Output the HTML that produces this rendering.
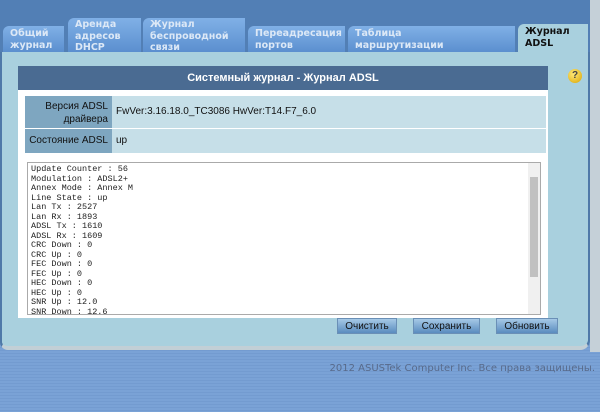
<!DOCTYPE html><html><head><meta charset="utf-8"><style>
body{margin:0;width:600px;height:412px;overflow:hidden;background:repeating-linear-gradient(#7aa2d6 0 2px,#739bd0 2px 3px);font-family:"Liberation Sans",sans-serif;position:relative}
.top{position:absolute;left:0;top:0;width:590px;height:52px;background:#527fb5}
.panel{position:absolute;left:0;top:52px;width:590px;height:298px;background:#a9d0de;border-left:2px solid #4f79a8;border-bottom:4px solid #c2cfd6;border-right:2px solid #4f79a8;border-radius:0 0 10px 8px;box-sizing:border-box}
.rgrey{position:absolute;left:590px;top:0;width:10px;height:352px;background:#c5d0d8}
.tab{position:absolute;top:26px;height:26px;background:linear-gradient(#80b0e6,#5b8fcf);color:#dce8f6;font:bold 9.5px/11.5px "DejaVu Sans",sans-serif;padding:2px 0 0 7px;box-sizing:border-box;border-radius:6px 0 0 0;white-space:nowrap;overflow:hidden}
.tab.up{top:18px;height:34px;padding-top:1px}
.act{background:#a9d0de;color:#111}
.hdr{position:absolute;left:18px;top:66px;width:530px;height:24px;background:#4a6b92;color:#fff;font:bold 11px/24px "Liberation Sans",sans-serif;text-align:center}
.box{position:absolute;left:18px;top:90px;width:530px;height:228px;background:#fff}
.l{position:absolute;left:25px;width:87px;background:#7ea6c0;font-size:10px;text-align:right;color:#111;box-sizing:border-box;padding-right:4px}
.v{position:absolute;left:112px;width:434px;background:#c6dfe8;font-size:10px;color:#111;padding-left:4px;box-sizing:border-box}
.ta{position:absolute;left:27px;top:162px;width:514px;height:153px;border:1px solid #aaa;box-sizing:border-box;overflow:hidden;background:#fff}
pre{margin:0;padding:2px 3px;font:8.5px/9.5px "Liberation Mono",monospace;color:#222}
.sb{position:absolute;right:0;top:0;width:12px;height:100%;background:#f0f0f0}
.btn{position:absolute;top:318px;height:16px;background:linear-gradient(#a6c9e6,#5a8cbf);border:1px solid #6a8fb6;font-size:10px;line-height:16px;text-align:center;color:#111;box-sizing:border-box}
</style></head><body>
<div class="top"></div><div class="rgrey"></div>
<div class="panel"></div>
<div class="tab" style="left:3px;width:61px">Общий<br>журнал</div>
<div class="tab up" style="left:68px;width:73px">Аренда<br>адресов<br>DHCP</div>
<div class="tab up" style="left:143px;width:102px">Журнал<br>беспроводной<br>связи</div>
<div class="tab" style="left:248px;width:97px">Переадресация<br>портов</div>
<div class="tab" style="left:348px;width:167px">Таблица<br>маршрутизации</div>
<div class="tab act" style="left:518px;width:70px;top:24px;height:29px">Журнал<br>ADSL</div>
<div class="hdr">Системный журнал - Журнал ADSL</div>
<div class="box"></div>
<div class="l" style="top:96px;height:32px;padding-top:4px;line-height:13px">Версия ADSL<br>драйвера</div>
<div class="v" style="top:96px;height:32px;line-height:32px">FwVer:3.16.18.0_TC3086 HwVer:T14.F7_6.0</div>
<div class="l" style="top:129px;height:24px;line-height:24px">Состояние ADSL</div>
<div class="v" style="top:129px;height:24px;line-height:24px">up</div>
<div class="ta"><pre>Update Counter : 56
Modulation : ADSL2+
Annex Mode : Annex M
Line State : up
Lan Tx : 2527
Lan Rx : 1893
ADSL Tx : 1610
ADSL Rx : 1609
CRC Down : 0
CRC Up : 0
FEC Down : 0
FEC Up : 0
HEC Down : 0
HEC Up : 0
SNR Up : 12.0
SNR Down : 12.6</pre><div class="sb"><div style="position:absolute;left:2px;top:14px;width:8px;height:100px;background:#c1c1c1"></div></div></div>
<div class="btn" style="left:337px;width:60px">Очистить</div>
<div class="btn" style="left:413px;width:67px">Сохранить</div>
<div class="btn" style="left:496px;width:62px">Обновить</div>
<div style="position:absolute;left:568px;top:69px;width:14px;height:14px;border-radius:50%;background:radial-gradient(circle at 40% 35%,#ffe97a,#d9a400);color:#444;font:bold 10px/14px sans-serif;text-align:center">?</div>
<div style="position:absolute;right:5px;top:363px;font:10px/12px 'DejaVu Sans',sans-serif;color:#586a8a">2012 ASUSTek Computer Inc. Все права защищены.</div>
</body></html>
